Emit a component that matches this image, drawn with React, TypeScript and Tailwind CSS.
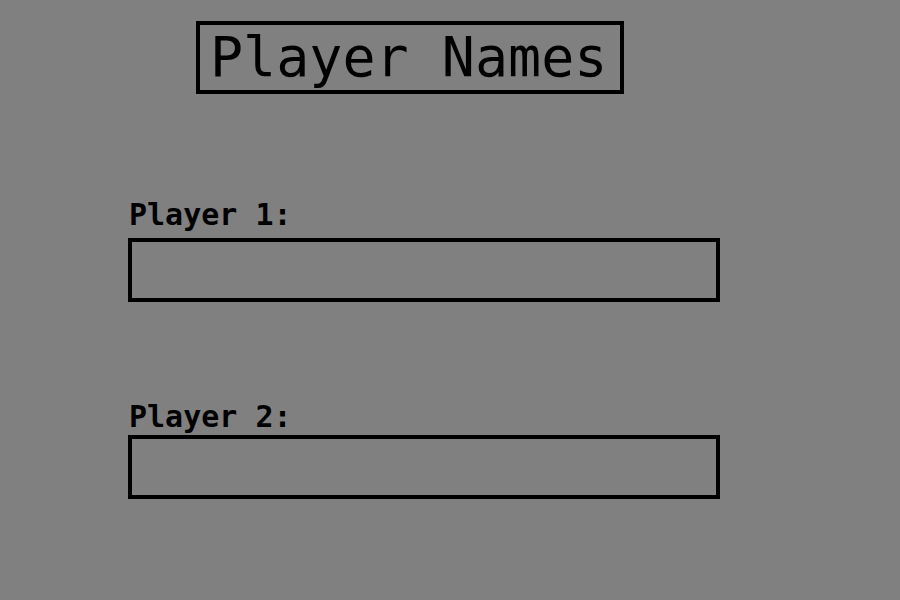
export default function App() {
	return (
		<div className="min-h-screen w-full bg-[#808080] pt-[21px] font-['DejaVu_Sans_Mono',monospace] text-black">
			<h1 className="ml-[196px] inline-block w-[428px] border-4 border-black pl-[10px] text-[55px] font-normal leading-[65px]">Player Names</h1>
			<form className="ml-[128px] flex flex-col">
				<label htmlFor="p1" className="mt-[105px] pl-[1px] text-[30px] font-bold leading-[32px]">Player 1:</label>
				<input id="p1" type="text" className="mt-[7px] h-[64px] w-[592px] border-4 border-black bg-transparent px-2 text-2xl outline-none" />
				<label htmlFor="p2" className="mt-[99px] pl-[1px] text-[30px] font-bold leading-[32px]">Player 2:</label>
				<input id="p2" type="text" className="mt-[2px] h-[64px] w-[592px] border-4 border-black bg-transparent px-2 text-2xl outline-none" />
			</form>
		</div>
	);
}
